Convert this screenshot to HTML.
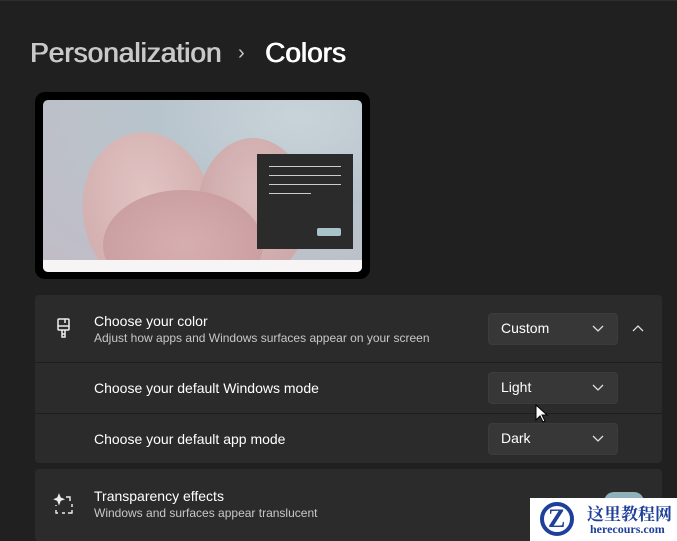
<!DOCTYPE html>
<html><head><style>
*{margin:0;padding:0;box-sizing:border-box}
body{width:677px;height:541px;background:#202020;font-family:"Segoe UI","Liberation Sans",sans-serif;color:#fff;position:relative;overflow:hidden}
.a{position:absolute}
.card{position:absolute;left:35px;width:627px;background:#2b2b2b;border-radius:4px}
.dd{position:absolute;left:488px;width:130px;height:32px;background:#373737;border-radius:4px;border:1px solid #3c3c3c;font-size:14px;padding:6px 0 0 12px}
.dd svg{position:absolute;right:13px;top:11px}
.t{font-size:14px;color:#fff}
.s{font-size:12px;color:#c8c8c8}
.h{font-size:28px;text-shadow:0.6px 0 0 currentColor,-0.3px 0 0 currentColor}
</style></head><body>
<div class="a" style="left:0;top:0;width:677px;height:1px;background:#2e2e2e"></div>
<div class="a h" style="left:30px;top:37px;color:#c9c9c9">Personalization</div>
<div class="a" style="left:238px;top:42px;font-size:20px;color:#c9c9c9">›</div>
<div class="a h" style="left:265px;top:37px">Colors</div>
<div class="a" style="left:35px;top:92px;width:335px;height:187px;background:#000;border-radius:10px"></div>
<div class="a" style="left:43px;top:100px;width:319px;height:172px;border-radius:5px;overflow:hidden;background:radial-gradient(ellipse at 80% 10%,#c9d3da 0%,#b8c4cc 40%,#c2bcc6 100%)">
 <div class="a" style="left:40px;top:32px;width:130px;height:160px;border-radius:50%;background:radial-gradient(ellipse at 50% 40%,#e1c4c3,#cfa8a9);transform:rotate(-10deg)"></div>
 <div class="a" style="left:155px;top:38px;width:110px;height:140px;border-radius:50%;background:radial-gradient(ellipse at 50% 40%,#dbbcbc,#c9a1a3)"></div>
 <div class="a" style="left:60px;top:90px;width:160px;height:110px;border-radius:50%;background:radial-gradient(ellipse,#d7aeb0,#c79a9d)"></div>
 <div class="a" style="left:0;top:160px;width:319px;height:12px;background:#f6f4f5"></div>
 <div class="a" style="left:214px;top:54px;width:96px;height:95px;background:#2b2b2b">
  <div class="a" style="left:12px;top:12px;width:72px;height:1px;background:#ccc"></div>
  <div class="a" style="left:12px;top:21px;width:72px;height:1px;background:#ccc"></div>
  <div class="a" style="left:12px;top:30px;width:72px;height:1px;background:#ccc"></div>
  <div class="a" style="left:12px;top:39px;width:42px;height:1px;background:#ccc"></div>
  <div class="a" style="left:60px;top:74px;width:24px;height:8px;background:#a9c3cb;border-radius:2px"></div>
 </div>
</div>
<div class="card" style="top:295px;height:168px"></div>
<div class="a" style="left:35px;top:362px;width:627px;height:1px;background:#1e1e1e"></div>
<div class="a" style="left:35px;top:413px;width:627px;height:1px;background:#1e1e1e"></div>
<svg class="a" style="left:56px;top:318px" width="16" height="22" viewBox="0 0 16 22" fill="none" stroke="#eee" stroke-width="1.5"><rect x="2" y="1" width="11" height="11" rx="1"/><path d="M2 8h11M9 1v4M6 12v4h3v-4M6 16v3h3v-3"/></svg>
<div class="a t" style="left:94px;top:313px">Choose your color</div>
<div class="a s" style="left:94px;top:331px">Adjust how apps and Windows surfaces appear on your screen</div>
<div class="dd" style="top:313px">Custom<svg width="12" height="8"><path d="M1 1l5 5 5-5" stroke="#ddd" fill="none" stroke-width="1.3"/></svg></div>
<svg class="a" style="left:632px;top:324px" width="12" height="8"><path d="M1 7l5-5 5 5" stroke="#ddd" fill="none" stroke-width="1.3"/></svg>
<div class="a t" style="left:94px;top:380px">Choose your default Windows mode</div>
<div class="dd" style="top:372px">Light<svg width="12" height="8"><path d="M1 1l5 5 5-5" stroke="#ddd" fill="none" stroke-width="1.3"/></svg></div>
<div class="a t" style="left:94px;top:431px">Choose your default app mode</div>
<div class="dd" style="top:423px">Dark<svg width="12" height="8"><path d="M1 1l5 5 5-5" stroke="#ddd" fill="none" stroke-width="1.3"/></svg></div>
<svg class="a" style="left:535px;top:404px" width="14" height="20"><path d="M1 1v15l4-4 3 6 2-1-3-6h5z" fill="#fff" stroke="#000" stroke-width="1"/></svg>
<div class="card" style="top:469px;height:72px"></div>
<svg class="a" style="left:53px;top:493px" width="22" height="22" fill="none" stroke="#eee" stroke-width="1.4"><path d="M6 2l1.2 3 3 1.2-3 1.2L6 10.5 4.8 7.4 2 6.2l2.8-1.2z" fill="#eee"/><path d="M13 4h4v4M19 11v3M19 17v3h-4M12 20H9M5 20H3v-3M3 13v-1" /></svg>
<div class="a t" style="left:94px;top:488px">Transparency effects</div>
<div class="a s" style="left:94px;top:506px">Windows and surfaces appear translucent</div>
<div class="a" style="left:604px;top:492px;width:40px;height:20px;border-radius:10px;background:#8fb1bb"></div>
<div class="a" style="left:530px;top:498px;width:147px;height:43px;background:#fff">
 <div class="a" style="left:10px;top:4px;width:34px;height:34px;border-radius:50%;border:4px solid #1e3f9a"></div>
 <div class="a" style="left:18px;top:6px;font-size:26px;font-weight:bold;color:#1e3f9a;font-family:'Liberation Serif',serif">Z</div>
 <div class="a" style="left:57px;top:2px;font-size:17px;font-weight:bold;color:#1e3f9a;font-family:'Liberation Serif','Noto Serif CJK SC',serif">这里教程网</div>
 <div class="a" style="left:60px;top:24px;font-size:12px;font-weight:bold;color:#1e3f9a;font-family:'Liberation Serif',serif">herecours.com</div>
</div>
</body></html>
